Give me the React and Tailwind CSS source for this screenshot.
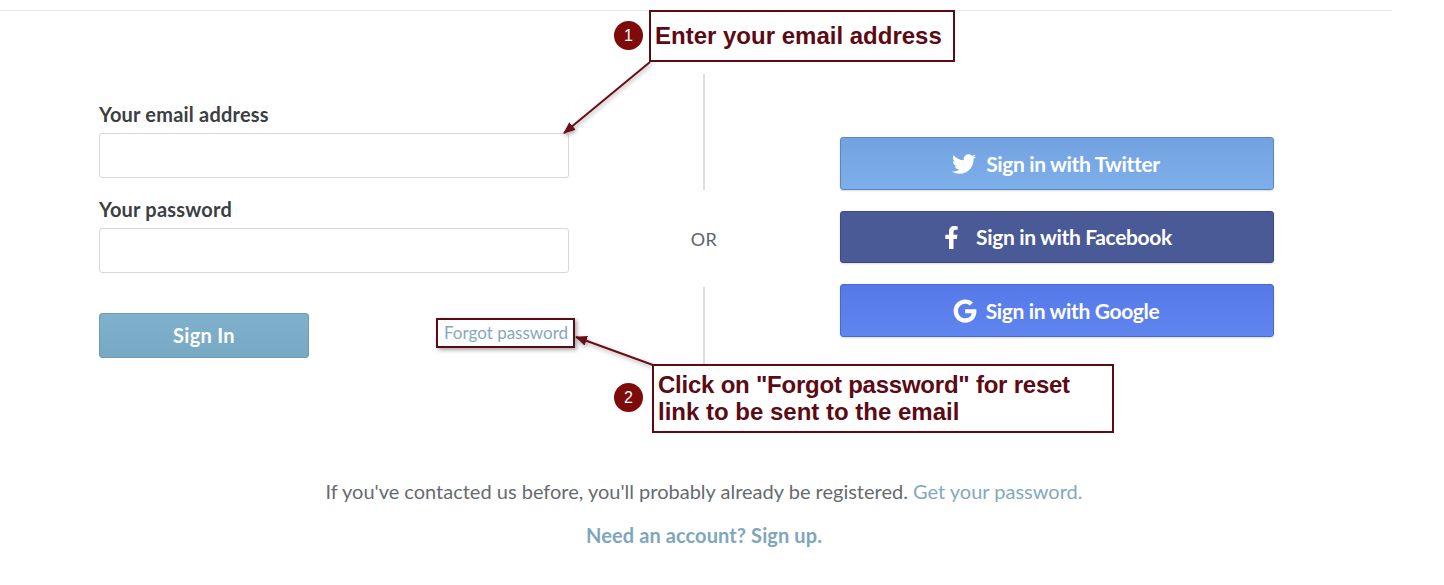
import { FaTwitter, FaFacebookF, FaGoogle } from "react-icons/fa";

const sans = "font-['Lato','Noto_Sans',sans-serif]";
const note = "font-['Liberation_Sans',Arial,sans-serif] font-bold text-[#5c0a14]";

const socialButtons = [
  {
    label: "Sign in with Twitter",
    Icon: FaTwitter,
    iconSize: 24,
    gap: "gap-[10px]",
    height: "h-[53px]",
    colors: "bg-gradient-to-b from-[#73a2e0] to-[#7dafeb] border-[#5a86c0]",
  },
  {
    label: "Sign in with Facebook",
    Icon: FaFacebookF,
    iconSize: 23,
    gap: "gap-[13px]",
    height: "h-[52px]",
    colors: "bg-[#4a5a96] border-[#3d4a80]",
  },
  {
    label: "Sign in with Google",
    Icon: FaGoogle,
    iconSize: 24,
    gap: "gap-[9px]",
    height: "h-[53px]",
    colors: "bg-gradient-to-b from-[#5679e8] to-[#5f85f0] border-[#4a68c8]",
  },
];

const Field = ({ label, className }) => (
  <div className={className}>
    <label className="block h-[19px] leading-[21px] text-[20px] font-bold tracking-[0.2px] text-[#3a4044]">
      {label}
    </label>
    <input className="mt-[10px] block w-full h-[45px] rounded-[3px] border border-[#d8d8d8] bg-white" />
  </div>
);

const Step = ({ n, className }) => (
  <div
    className={`absolute w-[29px] h-[29px] rounded-full bg-[#7f0a0a] text-white flex items-center justify-center text-[16px] font-['Liberation_Sans',Arial,sans-serif] ${className}`}
  >
    {n}
  </div>
);

export default function App() {
  return (
    <div className={`relative w-[1444px] h-[585px] overflow-hidden bg-white ${sans}`}>
      <div className="h-[11px] w-[1392px] border-b border-[#e8e8e8]" />

      {/* Form row */}
      <div className="flex pl-[99px] pt-[63px]">
        <div className="w-[470px] pt-[30px]">
          <Field label="Your email address" />
          <Field label="Your password" className="mt-[21px]" />
          <div className="mt-[40px] flex items-center">
            <button className="w-[210px] h-[45px] pb-[2px] rounded-[3px] border border-[#6c9bb8] bg-gradient-to-b from-[#7fb0cc] to-[#77a8c4] text-white text-[20px] tracking-[0.3px] font-bold">
              Sign In
            </button>
            <a className="ml-[135px] mb-[6px] text-[17px] leading-[20px] text-[#85a9bb] whitespace-nowrap">
              Forgot password
            </a>
          </div>
        </div>

        <div className="ml-[134px] w-[2px] flex flex-col items-center">
          <div className="w-[2px] h-[116px] shrink-0 bg-[#dddddd]" />
          <div className="h-[97px] pt-[2px] shrink-0 flex items-center justify-center text-[18px] tracking-[0.5px] text-[#5f6468]">
            OR
          </div>
          <div className="w-[2px] h-[77px] shrink-0 bg-[#dddddd]" />
        </div>

        <div className="ml-[135px] w-[434px] pt-[63px] flex flex-col gap-[21px]">
          {socialButtons.map(({ label, Icon, iconSize, gap, height, colors }) => (
            <button
              key={label}
              className={`w-full ${height} pr-[2px] rounded-[3px] border ${colors} shadow-[0_1px_2px_rgba(0,0,0,0.15)] flex items-center justify-center ${gap} text-white text-[21px] font-bold tracking-[-0.35px]`}
            >
              <Icon size={iconSize} />
              {label}
            </button>
          ))}
        </div>
      </div>

      {/* Footer copy */}
      <p className="mt-[115px] text-center text-[20px] leading-[24px] text-[#666b6f] pl-[16px] w-[1392px]">
        If you've contacted us before, you'll probably already be registered.{" "}
        <a className="text-[#82a9be]">Get your password.</a>
      </p>
      <p className="mt-[20px] text-center text-[20px] leading-[24px] tracking-[0.1px] font-bold text-[#7ea6bc] pl-[16px] w-[1392px]">
        Need an account? Sign up.
      </p>

      {/* Annotations */}
      <svg
        className="absolute left-0 top-0 pointer-events-none drop-shadow-[1px_2px_2px_rgba(0,0,0,0.35)]"
        width="1444"
        height="585"
      >
        <defs>
          <marker id="head" markerWidth="12" markerHeight="10" refX="11" refY="5" orient="auto" markerUnits="userSpaceOnUse">
            <path d="M0 0 L12 5 L0 10 Z" fill="#6b0d16" />
          </marker>
        </defs>
        <line x1="650" y1="62" x2="564" y2="133" stroke="#6b0d16" strokeWidth="2" markerEnd="url(#head)" />
        <line x1="653" y1="365" x2="576" y2="337" stroke="#6b0d16" strokeWidth="2" markerEnd="url(#head)" />
      </svg>

      <div className="absolute left-[436px] top-[318px] w-[139px] h-[30px] border-2 border-[#5c0a14] shadow-[2px_2px_4px_rgba(0,0,0,0.35)]" />

      <Step n={1} className="left-[614px] top-[21px]" />
      <div className={`absolute left-[649px] top-[10px] w-[306px] h-[52px] border-2 border-[#5c0a14] bg-white pl-[4px] flex items-center text-[24px] whitespace-nowrap ${note}`}>
        Enter your email address
      </div>

      <Step n={2} className="left-[614px] top-[383px]" />
      <div className={`absolute left-[652px] top-[364px] w-[462px] h-[69px] border-2 border-[#5c0a14] bg-white pl-[4px] pt-[5px] text-[24px] leading-[27px] whitespace-nowrap ${note}`}>
        <span className="tracking-[-0.23px]">Click on "Forgot password" for reset</span>
        <br />
        link to be sent to the email
      </div>
    </div>
  );
}
